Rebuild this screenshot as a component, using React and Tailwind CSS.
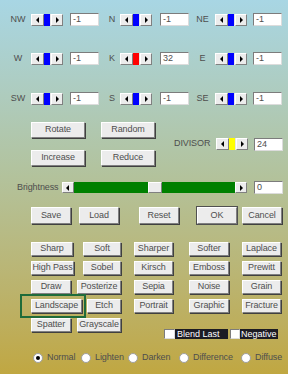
import React from 'react';

const raised = "bg-[#ececec] border border-t-white border-l-white border-r-[#808080] border-b-[#808080] shadow-[1px_1px_0_#404040]";
const sunken = "bg-white border border-t-[#7c7c7c] border-l-[#7c7c7c] border-r-[#dcdcdc] border-b-[#dcdcdc]";
const txt = "text-[9px] text-[#4e4e4e] whitespace-nowrap tracking-[-0.1px]";

function Arrow({ dir }) {
  return (
    <svg width="4" height="6" viewBox="0 0 4 6">
      {dir === "left" ? <polygon points="3,0 0,3 3,6" fill="#000" /> : <polygon points="1,0 4,3 1,6" fill="#000" />}
    </svg>
  );
}

function ArrowBtn({ dir, w }) {
  return (
    <div className={`${raised} ${w} h-full flex items-center justify-center shadow-none border-r-[#606060] border-b-[#606060]`}>
      <Arrow dir={dir} />
    </div>
  );
}

function Spin({ thumb }) {
  return (
    <div className="flex h-[12px] w-[32px]">
      <ArrowBtn dir="left" w="w-[13px]" />
      <div className="flex-1 flex bg-[#e6e6e6]">
        <div className={`w-[6px] ${thumb}`} />
      </div>
      <ArrowBtn dir="right" w="w-[12px]" />
    </div>
  );
}

function Field({ value, cls = "" }) {
  return (
    <div className={`${sunken} w-[29px] h-[13px] pl-[2px] text-[9px] leading-[11px] text-[#4e4e4e] ${cls}`}>{value}</div>
  );
}

function Btn({ label, w, h = "h-[16px]", cls = "" }) {
  return (
    <div className={`${raised} ${w} ${h} flex items-center justify-center ${txt} ${cls}`}>{label}</div>
  );
}

function DirRow({ cells, top }) {
  return (
    <div className={`flex items-center h-[13px] ${top}`}>
      <div className={`ml-[6px] w-[24px] text-center ${txt}`}>{cells[0][0]}</div>
      <div className="ml-[1px]"><Spin thumb={cells[0][2]} /></div>
      <Field value={cells[0][1]} cls="ml-[7px]" />
      <div className={`ml-[5px] w-[16px] text-center ${txt}`}>{cells[1][0]}</div>
      <Spin thumb={cells[1][2]} />
      <Field value={cells[1][1]} cls="ml-[8px]" />
      <div className={`ml-[4px] w-[19px] text-center ${txt}`}>{cells[2][0]}</div>
      <div className="ml-[3px]"><Spin thumb={cells[2][2]} /></div>
      <Field value={cells[2][1]} cls="ml-[6px]" />
    </div>
  );
}

function Radio({ label, on, cls }) {
  return (
    <div className={`flex items-center ${cls}`}>
      <div className="w-[10px] h-[10px] rounded-full bg-white border border-[#a0a0a0] flex items-center justify-center">
        {on && <div className="w-[4px] h-[4px] rounded-full bg-black" />}
      </div>
      <span className={`ml-[4px] ${txt} text-[#3c3c3c]`}>{label}</span>
    </div>
  );
}

const B = "bg-[#0000ff]";

export default function App() {
  const filterRows = [
    [["Sharp", "w-[42px]"], ["Soft", "w-[38px]"], "Sharper", "Softer", "Laplace"],
    [["High Pass", "w-[43px]"], ["Sobel", "w-[38px]"], "Kirsch", "Emboss", "Prewitt"],
    [["Draw", "w-[40px]"], ["Posterize", "w-[44px]"], "Sepia", "Noise", "Grain"],
  ];

  return (
    <div className="w-[288px] h-[374px] overflow-hidden bg-linear-to-b from-[#a8d6e4] via-[#b2c39f] via-45% to-[#c0a741] font-['Liberation_Sans',Arial,sans-serif] flex flex-col">
      <DirRow top="mt-[13px]" cells={[["NW", "-1", B], ["N", "-1", B], ["NE", "-1", B]]} />
      <DirRow top="mt-[26px]" cells={[["W", "-1", B], ["K", "32", "bg-[#ff0000]"], ["E", "-1", B]]} />
      <DirRow top="mt-[27px]" cells={[["SW", "-1", B], ["S", "-1", B], ["SE", "-1", B]]} />

      <div className="flex items-center mt-[17px]">
        <div className="ml-[31px] grid grid-cols-[54px_54px] gap-x-[16px] gap-y-[12px]">
          <Btn label="Rotate" w="w-[54px]" />
          <Btn label="Random" w="w-[54px]" />
          <Btn label="Increase" w="w-[54px]" />
          <Btn label="Reduce" w="w-[54px]" />
        </div>
        <div className={`ml-[19px] w-[36px] ${txt}`}>DIVISOR</div>
        <div className="ml-[6px]"><Spin thumb="bg-[#ffff00]" /></div>
        <Field value="24" cls="ml-[6px]" />
      </div>

      <div className="flex items-center mt-[15px] h-[13px]">
        <div className={`ml-[17px] w-[45px] ${txt}`}>Brightness</div>
        <div className="flex h-[11px] w-[185px]">
          <ArrowBtn dir="left" w="w-[12px]" />
          <div className="flex-1 flex bg-[#008000]">
            <div className="w-[74px]" />
            <div className={`${raised} shadow-none w-[14px] h-full`} />
          </div>
          <ArrowBtn dir="right" w="w-[12px]" />
        </div>
        <Field value="0" cls="ml-[7px]" />
      </div>

      <div className="flex items-center mt-[13px]">
        <Btn label="Save" w="w-[40px]" h="h-[17px]" cls="ml-[31px]" />
        <Btn label="Load" w="w-[40px]" h="h-[17px]" cls="ml-[8px]" />
        <Btn label="Reset" w="w-[40px]" h="h-[17px]" cls="ml-[20px]" />
        <Btn label="OK" w="w-[40px]" h="h-[17px]" cls="ml-[18px] outline outline-[#505050]" />
        <Btn label="Cancel" w="w-[40px]" h="h-[17px]" cls="ml-[5px]" />
      </div>

      <div className="flex flex-col gap-[5px] mt-[18px]">
        {filterRows.map((r, i) => (
          <div key={i} className="flex h-[14px]">
            <div className="ml-[31px] w-[90px] flex justify-between">
              <Btn label={r[0][0]} w={r[0][1]} h="h-[14px]" />
              <Btn label={r[1][0]} w={r[1][1]} h="h-[14px]" />
            </div>
            <Btn label={r[2]} w="w-[39px]" h="h-[14px]" cls="ml-[13px]" />
            <Btn label={r[3]} w="w-[40px]" h="h-[14px]" cls="ml-[16px]" />
            <Btn label={r[4]} w="w-[39px]" h="h-[14px]" cls="ml-[13px]" />
          </div>
        ))}
        <div className="flex h-[14px]">
          <div className="ml-[31px] w-[90px] flex justify-between">
            <div className="relative">
              <Btn label="Landscape" w="w-[51px]" h="h-[14px]" />
              <div className="absolute -left-[11px] -right-[4px] -top-[5px] -bottom-[5px] border-[2px] border-[#1e6b3a]" />
            </div>
            <Btn label="Etch" w="w-[34px]" h="h-[14px]" />
          </div>
          <Btn label="Portrait" w="w-[39px]" h="h-[14px]" cls="ml-[13px]" />
          <Btn label="Graphic" w="w-[40px]" h="h-[14px]" cls="ml-[16px]" />
          <Btn label="Fracture" w="w-[39px]" h="h-[14px]" cls="ml-[13px]" />
        </div>
        <div className="flex h-[14px]">
          <div className="ml-[31px] w-[90px] flex justify-between">
            <Btn label="Spatter" w="w-[40px]" h="h-[14px]" />
            <Btn label="Grayscale" w="w-[44px]" h="h-[14px]" />
          </div>
          <div className="ml-[43px] mt-[11px] flex h-[10px] shrink-0">
            <div className={`${sunken} w-[11px] h-[10px]`} />
            <div className="w-[53px] bg-[#1c1c24] text-white text-[9px] leading-[10px] pl-[2px] whitespace-nowrap">Blend Last</div>
            <div className={`${sunken} ml-[2px] w-[10px] h-[10px]`} />
            <div className="w-[38px] bg-[#1c1c24] text-white text-[9px] leading-[10px] pl-[1px] whitespace-nowrap">Negative</div>
          </div>
        </div>
      </div>

      <div className="flex items-center mt-[20px] h-[12px]">
        <Radio label="Normal" on cls="ml-[33px] w-[48px]" />
        <Radio label="Lighten" cls="w-[47px]" />
        <Radio label="Darken" cls="w-[51px]" />
        <Radio label="Difference" cls="w-[62px]" />
        <Radio label="Diffuse" />
      </div>
    </div>
  );
}
